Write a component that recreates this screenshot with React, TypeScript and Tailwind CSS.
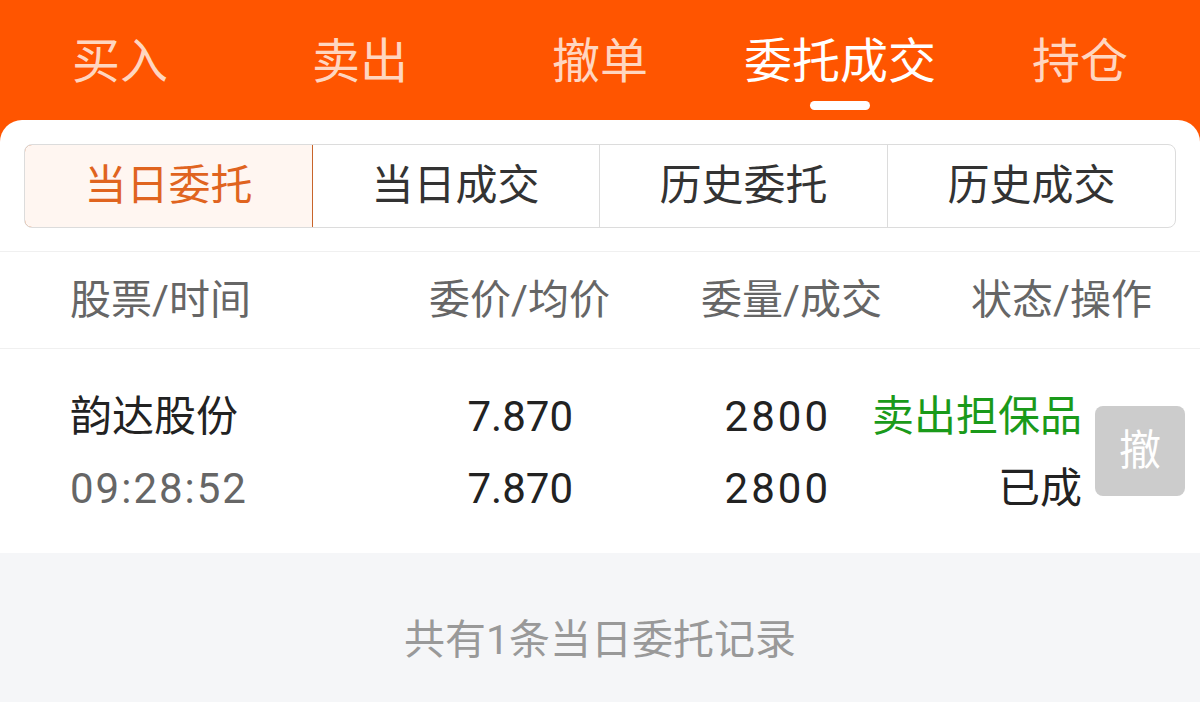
import React from 'react';

const topTabs = ['买入', '卖出', '撤单', '委托成交', '持仓'];
const segments = ['当日委托', '当日成交', '历史委托', '历史成交'];

export default function App() {
  const activeTab = 3;
  const activeSeg = 0;

  return (
    <div
      className="w-[1200px] h-[702px] overflow-hidden bg-[#f5f6f8] flex flex-col"
      style={{ fontFamily: 'Roboto, "Noto Sans CJK SC", sans-serif' }}
    >
      {/* Top tab bar */}
      <div className="bg-[#ff5500] h-[120px] shrink-0 grid grid-cols-5">
        {topTabs.map((t, i) => (
          <div key={t} className="relative flex items-center justify-center pt-[4px]">
            <span
              className={
                'text-[48px] leading-none ' + (i === activeTab ? 'text-white' : 'text-[#ffd6c0]')
              }
            >
              {t}
            </span>
            {i === activeTab && (
              <span className="absolute left-1/2 -translate-x-1/2 top-[101px] w-[60px] h-[9px] rounded-full bg-white" />
            )}
          </div>
        ))}
      </div>

      {/* White panel with rounded top */}
      <div className="bg-[#ff5500] shrink-0">
        <div className="bg-white rounded-t-[22px] pt-[24px] pb-[23px] px-[24px]">
          <div className="flex h-[84px] rounded-[8px] border border-[#dcdcdc] overflow-hidden">
            {segments.map((s, i) => (
              <div
                key={s}
                className={
                  'flex-1 flex items-center justify-center text-[42px] leading-none ' +
                  (i === activeSeg
                    ? 'bg-[#fff6f1] text-[#e0641f] border border-[#c8642a] rounded-l-[8px] -m-px'
                    : 'text-[#333333] ' + (i > 1 ? 'border-l border-[#dcdcdc]' : ''))
                }
              >
                {s}
              </div>
            ))}
          </div>
        </div>
      </div>

      {/* Column header */}
      <div className="bg-white border-t border-[#f0f0f0] border-b h-[98px] flex items-center pl-[70px] text-[41px] leading-none text-[#666666] shrink-0">
        <div className="w-[270px]">股票/时间</div>
        <div className="w-[270px] text-right">委价/均价</div>
        <div className="w-[272px] text-right">委量/成交</div>
        <div className="w-[270px] text-right">状态/操作</div>
      </div>

      {/* Data row */}
      <div className="bg-white h-[204px] flex items-center pl-[70px] shrink-0">
        <div className="flex flex-col gap-[30px] pt-[4px] text-[42px] leading-none">
          <div className="flex">
            <span className="w-[270px] text-[#222222]">韵达股份</span>
            <span className="w-[233px] text-right text-[#222222]">7.870</span>
            <span className="w-[255px] text-right text-[#222222]">
              <span className="tracking-[3px] -mr-[3px]">2800</span>
            </span>
            <span className="w-[254px] text-right text-[#1a9a1a]">卖出担保品</span>
          </div>
          <div className="flex">
            <span className="w-[270px] text-[#666666]">
              <span className="tracking-[2px]">09:28:52</span>
            </span>
            <span className="w-[233px] text-right text-[#222222]">7.870</span>
            <span className="w-[255px] text-right text-[#222222]">
              <span className="tracking-[3px] -mr-[3px]">2800</span>
            </span>
            <span className="w-[254px] text-right text-[#222222]">已成</span>
          </div>
        </div>
        <div className="ml-[13px] w-[90px] h-[90px] rounded-[8px] bg-[#cccccc] flex items-center justify-center text-white text-[42px] leading-none">
          撤
        </div>
      </div>

      {/* Footer */}
      <div className="flex-1 flex items-center justify-center pt-[26px] text-[41px] leading-none text-[#999999]">
        共有1条当日委托记录
      </div>
    </div>
  );
}
